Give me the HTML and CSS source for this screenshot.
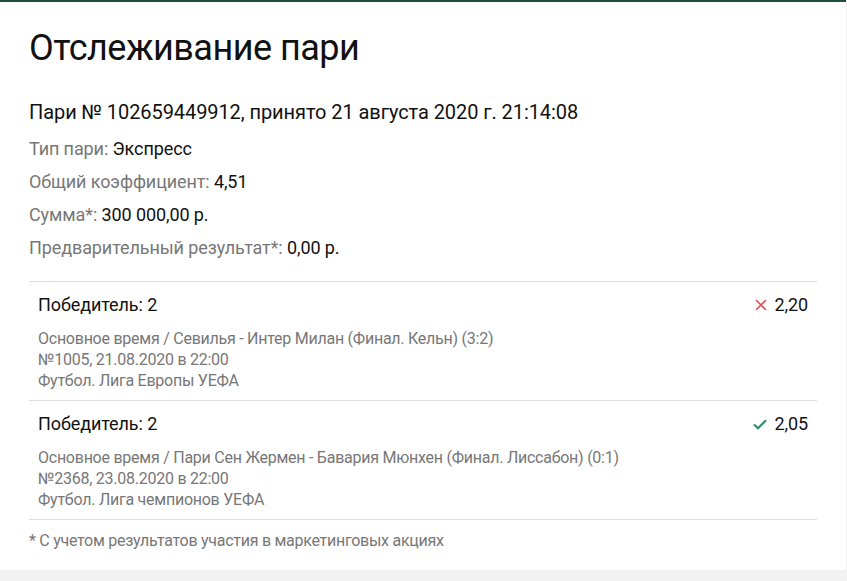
FILE: index.html
```html
<!DOCTYPE html>
<html>
<head>
  <title>Отслеживание пари</title>
  <meta charset="UTF-8">
  <link rel="stylesheet" href="styles.css">
</head>
<body>
  <div class="page">
    <h1 class="title">Отслеживание пари</h1>
    <div class="bet-head">Пари № 102659449912, принято 21 августа 2020 г. 21:14:08</div>

    <div class="info">
      <div class="info-row"><span class="info-label">Тип пари:</span> Экспресс</div>
      <div class="info-row"><span class="info-label">Общий коэффициент:</span> 4,51</div>
      <div class="info-row"><span class="info-label">Сумма*:</span> 300 000,00 р.</div>
      <div class="info-row"><span class="info-label">Предварительный результат*:</span> 0,00 р.</div>
    </div>

    <div class="events">
      <div class="event">
        <div class="event-top">
          <div class="event-outcome">Победитель: 2</div>
          <div class="event-odds">
            <svg class="mark" width="12" height="12" viewBox="0 0 12 12">
              <path d="M1 1 L11 11 M11 1 L1 11" stroke="#e0525a" stroke-width="1.6" fill="none"/>
            </svg>
            2,20
          </div>
        </div>
        <div class="event-info">
          <div>Основное время / Севилья - Интер Милан (Финал. Кельн) (3:2)</div>
          <div>№1005, 21.08.2020 в 22:00</div>
          <div>Футбол. Лига Европы УЕФА</div>
        </div>
      </div>

      <div class="event">
        <div class="event-top">
          <div class="event-outcome">Победитель: 2</div>
          <div class="event-odds">
            <svg class="mark" width="14" height="11" viewBox="0 0 14 11">
              <path d="M1 5.5 L5 9.3 L13 1.3" stroke="#2b8c6e" stroke-width="2.2" fill="none"/>
            </svg>
            2,05
          </div>
        </div>
        <div class="event-info">
          <div>Основное время / Пари Сен Жермен - Бавария Мюнхен (Финал. Лиссабон) (0:1)</div>
          <div>№2368, 23.08.2020 в 22:00</div>
          <div>Футбол. Лига чемпионов УЕФА</div>
        </div>
      </div>
    </div>

    <div class="note">* С учетом результатов участия в маркетинговых акциях</div>
  </div>
</body>
</html>
```

FILE: styles.css
```css
* {
  margin: 0;
  padding: 0;
  box-sizing: border-box;
}

body {
  background: #f2f2f2;
  font-family: Roboto, "Noto Sans", sans-serif;
  color: #111;
}

.page {
  width: 846px;
  height: 570px;
  background: #fff;
  border-top: 2px solid #1f4d3f;
  padding: 20px 29px 0;
}

.title {
  font-size: 36px;
  font-weight: 400;
  line-height: 52px;
  letter-spacing: -0.5px;
  color: #111;
}

.bet-head {
  font-size: 20px;
  line-height: 28px;
  letter-spacing: -0.08px;
  margin-top: 24px;
  margin-bottom: 6px;
}

.info-row {
  font-size: 18px;
  line-height: 33px;
  letter-spacing: -0.1px;
}

.info-label {
  color: #777;
}

.events {
  margin-top: 17px;
  border-top: 1px solid #ddd;
}

.event {
  border-bottom: 1px solid #ddd;
  padding: 11px 9px 9px 9px;
}

.event-top {
  display: flex;
  justify-content: space-between;
  align-items: center;
  font-size: 18px;
  line-height: 24px;
  letter-spacing: -0.1px;
}

.event-odds {
  display: flex;
  align-items: center;
  gap: 8px;
}

.event-info {
  margin-top: 11px;
  font-size: 16px;
  line-height: 21px;
  letter-spacing: -0.25px;
  color: #777;
}

.note {
  margin-top: 10px;
  font-size: 16px;
  line-height: 22px;
  letter-spacing: -0.27px;
  color: #777;
}
```
